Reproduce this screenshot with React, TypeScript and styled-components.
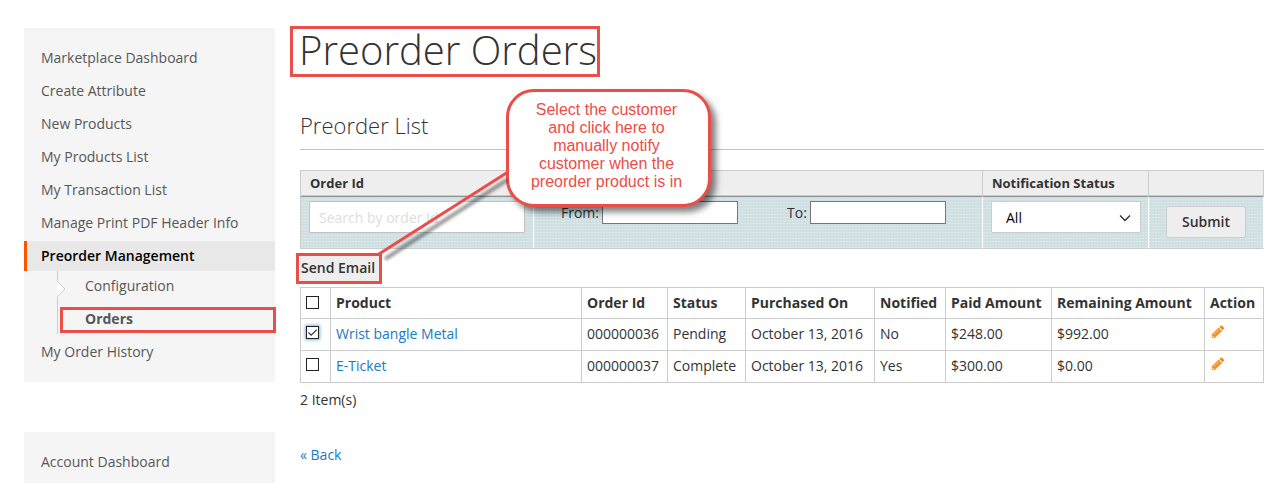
import React from 'react';
import styled, { createGlobalStyle } from 'styled-components';

const RED = '#eb4d48';
const LINE = '#cccccc';

const GlobalStyle = createGlobalStyle`
  * { box-sizing: border-box; }
  body {
    margin: 0;
    background: #fff;
    color: #333;
    font: 14px/20px 'Open Sans', sans-serif;
  }
`;

const Page = styled.div`
  display: flex;
  gap: 25px;
  padding: 26px 22px 0 24px;
`;

const Sidebar = styled.aside`
  flex: 0 0 251px;
  display: flex;
  flex-direction: column;
  gap: 50px;
  padding-top: 2px;
`;

const Panel = styled.nav<{ $last?: boolean }>`
  background: #f5f5f5;
  padding: 15px 0 ${p => (p.$last ? 6 : 15)}px;
`;

const List = styled.ul`
  list-style: none;
  margin: 0;
  padding: 0;
  display: flex;
  flex-direction: column;
  gap: 3px;
`;

const NavLink = styled.a<{ $current?: boolean }>`
  display: block;
  padding: 5px 14px;
  border-left: 3px solid ${p => (p.$current ? '#ff5501' : 'transparent')};
  background: ${p => (p.$current ? '#e8e8e8' : 'transparent')};
  color: ${p => (p.$current ? '#000' : '#575757')};
  font-weight: ${p => (p.$current ? 600 : 400)};
  text-decoration: none;
`;

const SubList = styled(List)`
  position: relative;
  margin-left: 33px;
  border-left: 1px solid ${LINE};
`;

const SubLink = styled.a<{ $current?: boolean }>`
  display: block;
  padding: 5px 27px;
  color: #575757;
  font-weight: ${p => (p.$current ? 700 : 400)};
  text-decoration: none;
`;

const Notch = styled.svg`
  position: absolute;
  left: -1px;
  top: 10px;
`;

const SubHighlight = styled.span`
  position: absolute;
  inset: 36px -1px 1px 2px;
  border: 3px solid ${RED};
  pointer-events: none;
`;

const Main = styled.main`
  flex: 1;
  min-width: 0;
  position: relative;
`;

const Title = styled.h1`
  width: fit-content;
  margin: 0 0 0 -10px;
  padding: 0 0 3px 6px;
  border: 3px solid ${RED};
  font-size: 40px;
  line-height: 42px;
  font-weight: 300;
`;

const Subtitle = styled.h2`
  margin: 34px 0 20px;
  padding-bottom: 10px;
  border-bottom: 1px solid #c1c1c1;
  font-size: 22px;
  line-height: 28px;
  font-weight: 300;
`;

const FilterTable = styled.table`
  width: 100%;
  table-layout: fixed;
  border-collapse: separate;
  border-spacing: 0;
`;

const FilterCol = styled.col<{ $w?: number }>`
  width: ${p => (p.$w ? `${p.$w}px` : 'auto')};
`;

const FilterHead = styled.th`
  height: 27px;
  padding: 0 9px 2px;
  background: #eee;
  border: solid ${LINE};
  border-width: 1px 1px 0 0;
  box-shadow: inset 0 -1px #8f9293, inset 0 -2px #ccc;
  font-size: 13px;
  line-height: 24px;
  font-weight: 700;
  text-align: left;
  &:first-child { border-left-width: 1px; }
`;

const FilterCell = styled.td`
  height: 52px;
  padding: 4px 8px;
  vertical-align: top;
  border-bottom: 1px solid ${LINE};
  border-right: 1px solid #fff;
  background:
    linear-gradient(#cfdfe2 2px, transparent 2px) 0 0 / 3px 3px,
    linear-gradient(90deg, #dce9ea 2px, #cfdfe2 2px) 0 0 / 3px 3px;
  &:first-child { border-left: 1px solid ${LINE}; }
`;

const SearchInput = styled.input`
  display: block;
  width: 100%;
  height: 32px;
  padding: 0 9px;
  border: 1px solid #c2c2c2;
  border-radius: 1px;
  background: #fff;
  font: 14px/20px 'Open Sans', sans-serif;
  &::placeholder { color: #ddd; opacity: 1; }
`;

const Dates = styled.div`
  display: flex;
  gap: 49px;
  padding-left: 19px;
`;

const DateField = styled.label`
  display: flex;
  gap: 3px;
  line-height: 24px;
`;

const DateInput = styled.input`
  width: 136px;
  height: 23px;
  padding: 1px 4px;
  border: 1px solid #767676;
  background: #fff;
  font: inherit;
`;

const SelectWrap = styled.div`
  position: relative;
`;

const Select = styled.select`
  display: block;
  appearance: none;
  width: 150px;
  height: 32px;
  padding: 1px 14px 0;
  border: 1px solid ${LINE};
  border-radius: 1px;
  background: #fff;
  color: #000;
  font: 14px/20px 'Open Sans', sans-serif;
`;

const Chevron = styled.svg`
  position: absolute;
  left: 128px;
  top: 13px;
  pointer-events: none;
`;

const SubmitButton = styled.button`
  display: block;
  width: 80px;
  height: 32px;
  margin: 5px 0 0 9px;
  padding: 0;
  border: 1px solid ${LINE};
  border-radius: 3px;
  background: #eee;
  color: #333;
  font: 600 14px/20px 'Open Sans', sans-serif;
`;

const EmailHighlight = styled.div`
  width: 86px;
  margin: 4px 0 3px -4px;
  border: 3px solid ${RED};
  height: 31px;
`;

const EmailButton = styled.button`
  display: block;
  width: 79px;
  height: 25px;
  padding: 0 0 2px 1px;
  margin-left: 1px;
  border: 0;
  background: #eee;
  color: #333;
  font: 600 14px/20px 'Open Sans', sans-serif;
  text-align: left;
  white-space: nowrap;
`;

const OrderTable = styled.table`
  width: 100%;
  table-layout: fixed;
  border-collapse: collapse;
  th, td {
    height: 32px;
    padding: 0 5px;
    border: 1px solid ${LINE};
    text-align: left;
    white-space: nowrap;
  }
  th { font-weight: 700; height: 31px; }
  td { padding-bottom: 2px; }
`;

const Check = styled.input`
  display: block;
  appearance: none;
  width: 13px;
  height: 13px;
  margin: 0 0 2px;
  border: 1px solid #222;
  background: #fff;
  &:checked {
    box-shadow: 0 0 3px 1px #7db4e6;
    background: #fff url("data:image/svg+xml,%3Csvg xmlns='http://www.w3.org/2000/svg' viewBox='0 0 11 11'%3E%3Cpath d='M1.5 5.5 4.2 8.2 9.8 2.6' fill='none' stroke='%23333' stroke-width='1.2'/%3E%3C/svg%3E") center / 11px 11px;
  }
`;

const Link = styled.a`
  color: #1979c3;
  text-decoration: none;
`;

const EditLink = styled.a`
  display: block;
  width: 14px;
  height: 14px;
  margin: 0 0 3px 1px;
  svg { display: block; }
`;

const Count = styled.p`
  margin: 7px 0 35px;
`;

const Callout = styled.div`
  position: absolute;
  left: 206px;
  top: 63px;
  width: 205px;
  height: 118px;
  padding: 9px 4px 0 0;
  border: 3px solid ${RED};
  border-radius: 28px;
  background: #fff;
  color: ${RED};
  font: 16px/18px 'Liberation Sans', Arial, sans-serif;
  text-align: center;
  white-space: pre-line;
  box-shadow: 5px 5px 6px rgba(0, 0, 0, 0.5);
`;

const Pointer = styled.svg`
  position: absolute;
  left: 76px;
  top: 134px;
  pointer-events: none;
`;

const links = [
  'Marketplace Dashboard',
  'Create Attribute',
  'New Products',
  'My Products List',
  'My Transaction List',
  'Manage Print PDF Header Info',
];

const orders = [
  { product: 'Wrist bangle Metal', id: '000000036', status: 'Pending', date: 'October 13, 2016', notified: 'No', paid: '$248.00', remaining: '$992.00', checked: true },
  { product: 'E-Ticket', id: '000000037', status: 'Complete', date: 'October 13, 2016', notified: 'Yes', paid: '$300.00', remaining: '$0.00', checked: false },
];

const columns: [string, number | undefined][] = [
  ['Product', undefined],
  ['Order Id', 86],
  ['Status', 78],
  ['Purchased On', 129],
  ['Notified', 71],
  ['Paid Amount', 106],
  ['Remaining Amount', 153],
  ['Action', 59],
];

const Pencil = () => (
  <svg width="14" height="14" viewBox="0 0 14 14" aria-hidden="true">
    <path d="M.8 12.8V9.4L7.6 2.6 11 6 4.2 12.8Z" fill="#f7922a" />
    <path d="M8.3 2 9.9.6Q10.5.2 11.1.7L12.9 2.5Q13.4 3.1 12.9 3.7L11.6 5.3Z" fill="#f58a1f" />
    <path d="M3 9.4 8.2 4.2" stroke="#fbc78b" strokeWidth="1" />
    <path d="M1.7 10.6 3 11.9H1.7Z" fill="#fff" />
  </svg>
);

export default function App() {
  return (
    <>
      <GlobalStyle />
      <Page>
        <Sidebar>
          <Panel aria-label="Marketplace">
            <List>
              {links.map(t => (
                <li key={t}><NavLink href="#">{t}</NavLink></li>
              ))}
              <li>
                <NavLink href="#" $current>Preorder Management</NavLink>
                <SubList>
                  <li><SubLink href="#">Configuration</SubLink></li>
                  <li>
                    <SubLink href="#" $current>Orders</SubLink>
                    <Notch width="9" height="16" viewBox="0 0 9 16" aria-hidden="true">
                      <path d="M0 0 8 8 0 16Z" fill="#fff" />
                      <path d="M.5 .5 8 8 .5 15.5" fill="none" stroke={LINE} />
                    </Notch>
                    <SubHighlight />
                  </li>
                </SubList>
              </li>
              <li><NavLink href="#">My Order History</NavLink></li>
            </List>
          </Panel>
          <Panel $last aria-label="Account">
            <List>
              <li><NavLink href="#">Account Dashboard</NavLink></li>
            </List>
          </Panel>
        </Sidebar>
        <Main>
          <Title>Preorder Orders</Title>
          <Subtitle>Preorder List</Subtitle>
          <FilterTable>
            <colgroup>
              <FilterCol $w={234} />
              <FilterCol />
              <FilterCol $w={166} />
              <FilterCol $w={115} />
            </colgroup>
            <thead>
              <tr>
                <FilterHead>Order Id</FilterHead>
                <FilterHead />
                <FilterHead>Notification Status</FilterHead>
                <FilterHead />
              </tr>
            </thead>
            <tbody>
              <tr>
                <FilterCell>
                  <SearchInput placeholder="Search by order Id" aria-label="Order Id" />
                </FilterCell>
                <FilterCell>
                  <Dates>
                    <DateField>From: <DateInput type="text" /></DateField>
                    <DateField>To: <DateInput type="text" /></DateField>
                  </Dates>
                </FilterCell>
                <FilterCell>
                  <SelectWrap>
                    <Select aria-label="Notification Status"><option>All</option></Select>
                    <Chevron width="12" height="8" viewBox="0 0 12 8" aria-hidden="true">
                      <path d="M1 1.5 6 6.5 11 1.5" fill="none" stroke="#333" strokeWidth="1.4" />
                    </Chevron>
                  </SelectWrap>
                </FilterCell>
                <FilterCell>
                  <SubmitButton type="submit">Submit</SubmitButton>
                </FilterCell>
              </tr>
            </tbody>
          </FilterTable>
          <EmailHighlight>
            <EmailButton type="button">Send Email</EmailButton>
          </EmailHighlight>
          <OrderTable>
            <colgroup>
              <FilterCol $w={30} />
              {columns.map(([name, w]) => <FilterCol key={name} $w={w} />)}
            </colgroup>
            <thead>
              <tr>
                <th><Check type="checkbox" aria-label="Select all" /></th>
                {columns.map(([name]) => <th key={name}>{name}</th>)}
              </tr>
            </thead>
            <tbody>
              {orders.map(o => (
                <tr key={o.id}>
                  <td><Check type="checkbox" defaultChecked={o.checked} aria-label={`Select ${o.product}`} /></td>
                  <td><Link href="#">{o.product}</Link></td>
                  <td>{o.id}</td>
                  <td>{o.status}</td>
                  <td>{o.date}</td>
                  <td>{o.notified}</td>
                  <td>{o.paid}</td>
                  <td>{o.remaining}</td>
                  <td><EditLink href="#" aria-label={`Edit ${o.product}`}><Pencil /></EditLink></td>
                </tr>
              ))}
            </tbody>
          </OrderTable>
          <Count>2 Item(s)</Count>
          <Link href="#">« Back</Link>
          <Callout>
            {'Select the customer\nand click here to\nmanually notify\ncustomer when the\npreorder product is in'}
          </Callout>
          <Pointer width="140" height="110" viewBox="0 0 140 110" aria-hidden="true">
            <defs>
              <filter id="soft" x="-20%" y="-20%" width="140%" height="140%">
                <feGaussianBlur stdDeviation="1.5" />
              </filter>
            </defs>
            <path d="M9 99 131 20" stroke="#000" strokeOpacity=".4" strokeWidth="4" filter="url(#soft)" />
            <path d="M3 94 132 12" stroke={RED} strokeWidth="3" />
          </Pointer>
        </Main>
      </Page>
    </>
  );
}
